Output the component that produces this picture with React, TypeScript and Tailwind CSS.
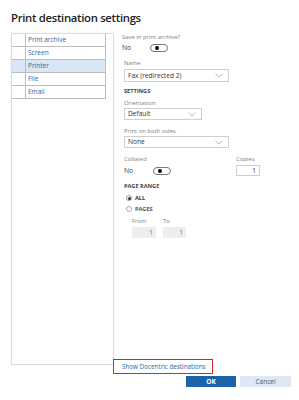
const items = ["Print archive", "Screen", "Printer", "File", "Email"];

function Toggle() {
  return (
    <div className="flex h-[8px] w-[18px] items-center rounded-full border border-[#777] pl-[4px]">
      <div className="h-[4px] w-[4px] rounded-full bg-black" />
    </div>
  );
}

function Chevron() {
  return (
    <svg width="8" height="5" viewBox="0 0 8 5" className="shrink-0">
      <path d="M0.5 0.8 L4 4 L7.5 0.8" fill="none" stroke="#999" strokeWidth="0.7" />
    </svg>
  );
}

function Select({ value, width, height }: { value: string; width: string; height: string }) {
  return (
    <div className={`flex items-center justify-between border border-[#cfcfcf] pl-[3px] pr-[5px] ${width} ${height}`}>
      <span className="text-[6.6px] text-[#333]">{value}</span>
      <Chevron />
    </div>
  );
}

function Label({ text }: { text: string }) {
  return <div className="h-[8px] text-[5.9px] leading-[8px] text-[#808080]">{text}</div>;
}

function Heading({ text }: { text: string }) {
  return <div className="h-[8px] text-[5.6px] font-bold leading-[8px] text-[#444]">{text}</div>;
}

export default function App() {
  return (
    <div
      className="h-[400px] w-[299px] bg-white pl-[11px] text-[#333]"
      style={{ fontFamily: '"Open Sans", "Noto Sans", sans-serif' }}
    >
      <div className="h-[33px] pt-[10px] text-[11.3px] font-semibold leading-[16px] tracking-[-0.3px] text-[#222]">
        Print destination settings
      </div>

      <div className="flex items-start">
        {/* destination list */}
        <div className="flex h-[332px] w-[103px] shrink-0 border border-[#dcdcdc] shadow-[0_0_2px_rgba(0,0,0,0.08)]">
          <div className="w-[94px]">
            {items.map((it) => (
              <div
                key={it}
                className={`flex h-[13px] border-b border-r border-[#bdbdbd] ${it === "Printer" ? "bg-[#d8e7f6]" : ""}`}
              >
                <div className="w-[14px] shrink-0 border-r border-[#bdbdbd]" />
                <div className="pl-[2px] text-[6.5px] leading-[12px] text-[#2a67a8]">{it}</div>
              </div>
            ))}
          </div>
        </div>

        {/* settings */}
        <div className="flex h-[341px] flex-1 flex-col pl-[10px]">
          <div className="-ml-[2px]">
            <Label text="Save in print archive?" />
            <div className="mt-[2px] flex h-[10px] items-center">
              <span className="w-[28px] text-[6.8px] text-[#444]">No</span>
              <Toggle />
            </div>
          </div>

          <div className="mt-[6px]">
            <Label text="Name" />
          </div>
          <div className="mt-[2px]">
            <Select value="Fax (redirected 2)" width="w-[105px]" height="h-[13px]" />
          </div>

          <div className="mt-[5px]">
            <Heading text="SETTINGS" />
          </div>
          <div className="mt-[4px]">
            <Label text="Orientation" />
          </div>
          <div className="mt-[1px]">
            <Select value="Default" width="w-[78px]" height="h-[12px]" />
          </div>

          <div className="mt-[7px]">
            <Label text="Print on both sides" />
          </div>
          <div className="mt-[1px]">
            <Select value="None" width="w-[105px]" height="h-[12px]" />
          </div>

          <div className="mt-[7px] flex">
            <div className="w-[112px]">
              <Label text="Collated" />
              <div className="mt-[3px] flex h-[10px] items-center">
                <span className="w-[29px] text-[6.8px] text-[#444]">No</span>
                <Toggle />
              </div>
            </div>
            <div>
              <Label text="Copies" />
              <div className="mt-[2px] flex h-[11px] w-[24px] items-center justify-end border border-[#cfcfcf] pr-[3px] text-[6.5px] text-[#333]">
                1
              </div>
            </div>
          </div>

          <div className="mt-[6px]">
            <Heading text="PAGE RANGE" />
          </div>
          <div className="mt-[3px] flex h-[10px] items-center pl-[2px]">
            <div className="flex h-[6px] w-[6px] items-center justify-center rounded-full border border-[#999]">
              <div className="h-[3px] w-[3px] rounded-full bg-[#333]" />
            </div>
            <span className="ml-[3px] text-[5.6px] font-bold text-[#333]">ALL</span>
          </div>
          <div className="mt-[1px] flex h-[10px] items-center pl-[2px]">
            <div className="h-[6px] w-[6px] rounded-full border border-[#aaa]" />
            <span className="ml-[3px] text-[5.6px] font-bold text-[#555]">PAGES</span>
          </div>
          <div className="mt-[3px] flex gap-[7px] pl-[8px]">
            <div className="w-[24px]">
              <Label text="From" />
              <div className="mt-[2px] flex h-[11px] items-center justify-end bg-[#eeeeee] pr-[3px] text-[6.5px] text-[#777]">
                1
              </div>
            </div>
            <div className="w-[23px]">
              <Label text="To" />
              <div className="mt-[2px] flex h-[11px] items-center justify-end bg-[#eeeeee] pr-[3px] text-[6.5px] text-[#777]">
                1
              </div>
            </div>
          </div>

          <div className="mt-auto -ml-[11px] flex h-[15px] w-[100px] items-center border-[1.5px] border-[#d9262c] pl-[8px] text-[6.3px] text-[#2a67a8]">
            Show Docentric destinations
          </div>
        </div>
      </div>

      <div className="mt-[2px] flex justify-end gap-[4px] pr-[8px]">
        <div className="flex h-[11px] w-[50px] items-center justify-center bg-[#1c64aa] text-[6.5px] font-bold text-white">
          OK
        </div>
        <div className="flex h-[11px] w-[51px] items-center justify-center bg-[#dde8f4] text-[6.5px] text-[#555]">
          Cancel
        </div>
      </div>
    </div>
  );
}
